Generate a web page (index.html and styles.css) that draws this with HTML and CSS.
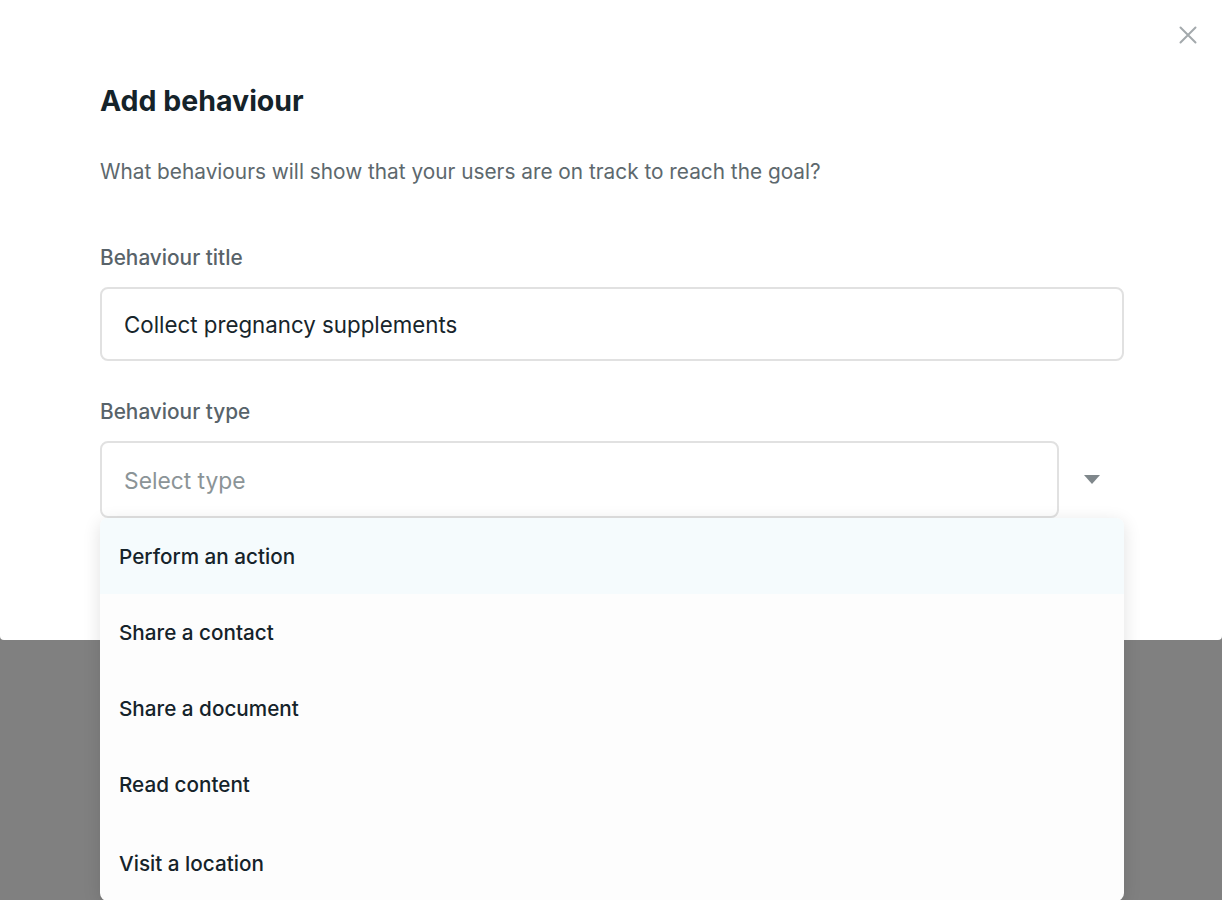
FILE: index.html
```html
<!DOCTYPE html>
<html lang="en">
<head>
<meta charset="utf-8">
<title>Add behaviour</title>
<link rel="stylesheet" href="styles.css">
</head>
<body>
<div class="modal">
  <button class="close" aria-label="Close">
    <svg width="18" height="18" viewBox="0 0 18 18"><path d="M1.5 1.5 L16.5 16.5 M16.5 1.5 L1.5 16.5" stroke="#a3a9ac" stroke-width="2" stroke-linecap="round" fill="none"/></svg>
  </button>
  <h1 class="title">Add behaviour</h1>
  <p class="subtitle">What behaviours will show that your users are on track to reach the goal?</p>
  <div class="field">
    <label class="label">Behaviour title</label>
    <div class="input">Collect pregnancy supplements</div>
  </div>
  <div class="field field-type">
    <label class="label">Behaviour type</label>
    <div class="select-row">
      <div class="select">Select type</div>
      <span class="arrow"></span>
    </div>
    <ul class="menu">
      <li class="item active">Perform an action</li>
      <li class="item">Share a contact</li>
      <li class="item">Share a document</li>
      <li class="item">Read content</li>
      <li class="item">Visit a location</li>
    </ul>
  </div>
</div>
</body>
</html>
```

FILE: styles.css
```css
* { box-sizing: border-box; }
html, body { margin: 0; padding: 0; }
body {
  background: #808080;
  font-family: Inter, "Noto Sans", sans-serif;
  height: 900px;
  overflow: hidden;
}
.modal {
  position: relative;
  background: #ffffff;
  height: 640px;
  border-radius: 0 0 4px 4px;
  padding: 83px 98px 0 100px;
}
.close {
  position: absolute;
  top: 26px;
  right: 25px;
  width: 18px;
  height: 18px;
  padding: 0;
  border: 0;
  background: none;
  display: flex;
}
.title {
  margin: 0;
  font-size: 28.5px;
  line-height: 36px;
  font-weight: 700;
  color: #15232a;
}
.subtitle {
  margin: 39px 0 0;
  font-size: 20.8px;
  line-height: 28px;
  color: #5d686d;
}
.field { display: flex; flex-direction: column; }
.label {
  margin-top: 58px;
  font-size: 20.8px;
  line-height: 28px;
  font-weight: 500;
  color: #58636a;
}
.input {
  margin-top: 15px;
  height: 74px;
  border: 2px solid #e1e1e1;
  border-radius: 8px;
  padding: 0 22px;
  display: flex;
  align-items: center;
  font-size: 22.3px;
  color: #17252b;
}
.field-type { position: relative; }
.field-type .label { margin-top: 37px; }
.select-row {
  margin-top: 15px;
  display: flex;
  align-items: center;
}
.select {
  width: 959px;
  height: 77px;
  border: 2px solid #e1e1e1;
  border-radius: 8px;
  padding: 2px 22px 0;
  display: flex;
  align-items: center;
  font-size: 22.8px;
  color: #8b9497;
}
.arrow {
  margin-left: 25px;
  width: 0;
  height: 0;
  border-left: 8px solid transparent;
  border-right: 8px solid transparent;
  border-top: 9px solid #7f878b;
}
.menu {
  position: absolute;
  left: 0;
  top: 157px;
  width: 1024px;
  margin: 0;
  padding: 0;
  list-style: none;
  background: #fdfdfd;
  border-radius: 8px;
  box-shadow: 0 4px 18px rgba(0, 0, 0, 0.12);
  overflow: hidden;
}
.item {
  height: 76px;
  padding: 0 20px 0 19px;
  display: flex;
  align-items: center;
  font-size: 20.7px;
  font-weight: 500;
  color: #15232a;
}
.item:last-child { height: 79px; padding-top: 3px; }
.item.active { background: #f5fbfd; }
```
